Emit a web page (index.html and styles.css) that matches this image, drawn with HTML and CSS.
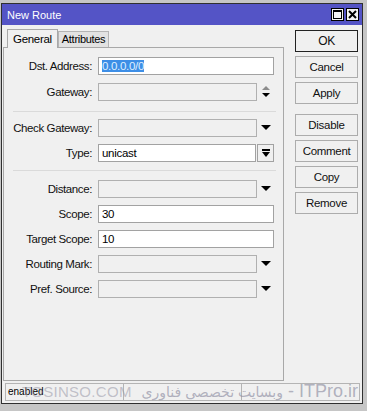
FILE: index.html
```html
<!DOCTYPE html>
<html lang="en">
<head>
    <meta charset="UTF-8">
    <title>New Route</title>
    <link rel="stylesheet" href="styles.css">
</head>
<body>
    <div class="window">
        <!-- Title bar -->
        <div class="titlebar">
            <span class="title">New Route</span>
            <div class="title-buttons">
                <span class="tbtn"><svg width="9" height="9" viewBox="0 0 9 9"><rect x="0.5" y="0.5" width="8" height="8" fill="none" stroke="#000" stroke-width="1"/><rect x="0" y="0" width="9" height="2" fill="#000"/></svg></span>
                <span class="tbtn"><svg width="9" height="9" viewBox="0 0 9 9"><path d="M1 1 L8 8 M8 1 L1 8" stroke="#000" stroke-width="2"/></svg></span>
            </div>
        </div>

        <div class="main">
            <div class="left">
                <div class="tabs">
                    <span class="tab active">General</span>
                    <span class="tab">Attributes</span>
                </div>
                <div class="panel">
                    <div class="group group-1">
                        <div class="row">
                            <label class="label">Dst. Address:</label>
                            <div class="field wide enabled"><span class="selected">0.0.0.0/0</span></div>
                        </div>
                        <div class="row">
                            <label class="label">Gateway:</label>
                            <div class="field disabled"></div>
                            <span class="arrow">
                                <svg width="10" height="14" viewBox="0 0 10 14"><path d="M1 5 L5 1 L9 5 Z" fill="#8c8c8c"/><path d="M1 8 L9 8 L5 12 Z" fill="#000"/></svg>
                            </span>
                        </div>
                    </div>
                    <div class="sep sep-1"></div>
                    <div class="group group-2">
                        <div class="row">
                            <label class="label">Check Gateway:</label>
                            <div class="field disabled"></div>
                            <span class="arrow">
                                <svg width="10" height="6" viewBox="0 0 10 6"><path d="M0 0 L10 0 L5 5 Z" fill="#000"/></svg>
                            </span>
                        </div>
                        <div class="row">
                            <label class="label">Type:</label>
                            <div class="field enabled type-field">unicast</div>
                            <span class="type-btn">
                                <svg width="8" height="9" viewBox="0 0 8 9"><rect x="0" y="0" width="8" height="2" fill="#000"/><path d="M0 3 L8 3 L4 8 Z" fill="#000"/></svg>
                            </span>
                        </div>
                    </div>
                    <div class="sep sep-2"></div>
                    <div class="group group-3">
                        <div class="row">
                            <label class="label">Distance:</label>
                            <div class="field disabled"></div>
                            <span class="arrow">
                                <svg width="10" height="6" viewBox="0 0 10 6"><path d="M0 0 L10 0 L5 5 Z" fill="#000"/></svg>
                            </span>
                        </div>
                        <div class="row">
                            <label class="label">Scope:</label>
                            <div class="field wide enabled">30</div>
                        </div>
                        <div class="row">
                            <label class="label">Target Scope:</label>
                            <div class="field wide enabled">10</div>
                        </div>
                        <div class="row">
                            <label class="label">Routing Mark:</label>
                            <div class="field disabled"></div>
                            <span class="arrow">
                                <svg width="10" height="6" viewBox="0 0 10 6"><path d="M0 0 L10 0 L5 5 Z" fill="#000"/></svg>
                            </span>
                        </div>
                        <div class="row">
                            <label class="label">Pref. Source:</label>
                            <div class="field disabled"></div>
                            <span class="arrow">
                                <svg width="10" height="6" viewBox="0 0 10 6"><path d="M0 0 L10 0 L5 5 Z" fill="#000"/></svg>
                            </span>
                        </div>
                    </div>
                </div>
            </div>

            <!-- Buttons -->
            <div class="buttons">
                <button class="btn default">OK</button>
                <button class="btn">Cancel</button>
                <button class="btn">Apply</button>
                <button class="btn spaced">Disable</button>
                <button class="btn">Comment</button>
                <button class="btn">Copy</button>
                <button class="btn">Remove</button>
            </div>
        </div>

        <!-- Status bar -->
        <div class="statusbar">
            <span class="cell first">enabled</span>
            <span class="cell"></span>
            <span class="cell"></span>
        </div>
        <div class="watermark">
            <span class="wm-left">TOSINSO.COM</span>
            <span class="wm-right"><span class="wm-fa" dir="rtl">وبسایت تخصصی فناوری</span> - ITPro.ir</span>
        </div>
    </div>
</body>
</html>
```

FILE: styles.css
```css
/* Global styles */
body {
    margin: 0;
    padding: 0;
    background: #c6c6c6;
    font-family: 'Liberation Sans', Arial, 'DejaVu Sans', sans-serif;
    color: #000;
}

.window {
    position: relative;
    margin: 3px 0 0 1px;
    width: 360px;
    height: 399px;
    border: 1px solid #303030;
    background: #f0f0f0;
    overflow: hidden;
}

/* Title bar */
.titlebar {
    height: 21px;
    background: #5454c6;
    display: flex;
    align-items: center;
    justify-content: space-between;
    padding: 0 3px 0 5px;
}

.titlebar .title {
    color: #fff;
    font-size: 11px;
}

.title-buttons {
    display: flex;
    gap: 2px;
}

.tbtn {
    width: 11px;
    height: 11px;
    border: 1px solid #000;
    background: #f4f4f4;
    display: flex;
    align-items: center;
    justify-content: center;
}

/* Main area */
.main {
    display: flex;
    padding: 3px 0 0 1px;
}

.left {
    width: 281px;
}

.tabs {
    display: flex;
    align-items: flex-end;
    height: 19px;
    padding-left: 4px;
}

.tab {
    font-size: 11px;
    letter-spacing: -0.3px;
    height: 15px;
    line-height: 15px;
    padding: 0 3px;
    border: 1px solid #b4b4b4;
    border-bottom: none;
    background: #e2e2e2;
}

.tab.active {
    height: 18px;
    line-height: 18px;
    font-size: 11.5px;
    padding: 0 5px;
    background: #f0f0f0;
    border-color: #a8a8a8;
    position: relative;
    top: 1px;
}

.panel {
    height: 332px;
    border: 1px solid #a8a8a8;
    background: #f0f0f0;
}

.group {
    display: flex;
    flex-direction: column;
}

.group-1 {
    padding-top: 9px;
    gap: 8px;
}

.group-2 {
    gap: 7px;
}

.group-3 {
    gap: 7px;
}

.sep {
    height: 1px;
    background: #dadada;
    margin: 0 7px 0 9px;
}

.sep-1 {
    margin-top: 10px;
    margin-bottom: 7px;
}

.sep-2 {
    margin-top: 8px;
    margin-bottom: 9px;
}

.row {
    display: flex;
    align-items: center;
    height: 18px;
}

.label {
    width: 88px;
    text-align: right;
    font-size: 11.5px;
    letter-spacing: -0.4px;
    color: #111;
}

.field {
    box-sizing: border-box;
    margin-left: 6px;
    width: 159px;
    height: 18px;
    font-size: 11.5px;
    letter-spacing: -0.3px;
    line-height: 16px;
    padding-left: 3px;
}

.field.wide {
    width: 176px;
}

.field.enabled {
    background: #fff;
    border: 1px solid #a2a2a2;
}

.field.disabled {
    background: #f0f0f0;
    border: 1px solid #b0b0b0;
}

.field.type-field {
    width: 158px;
}

.selected {
    background: #3d8ee6;
    color: #dfefff;
}

.arrow {
    width: 17px;
    display: flex;
    justify-content: center;
    align-items: center;
}

.type-btn {
    box-sizing: border-box;
    margin-left: 1px;
    width: 17px;
    height: 18px;
    border: 1px solid #a2a2a2;
    background: #f0f0f0;
    display: flex;
    justify-content: center;
    align-items: center;
}

/* Buttons column */
.buttons {
    margin-left: 11px;
    padding-top: 2px;
    width: 63px;
    display: flex;
    flex-direction: column;
    gap: 4px;
}

.btn {
    height: 22px;
    padding: 0;
    font-family: inherit;
    font-size: 11.5px;
    letter-spacing: -0.3px;
    color: #111;
    background: #f0f0f0;
    border: 1px solid #acacac;
    border-radius: 0;
}

.btn.default {
    border-color: #222;
    font-size: 12px;
}

.btn.spaced {
    margin-top: 6px;
}

/* Status bar */
.statusbar {
    display: flex;
    margin: 2px 0 0 3px;
    height: 18px;
    width: 355px;
}

.cell {
    box-sizing: border-box;
    flex: 1;
    border: 1px solid #b4b4b4;
    border-left: none;
    font-size: 10px;
    line-height: 16px;
    padding-left: 2px;
}

.cell.first {
    border-left: 1px solid #b4b4b4;
}

/* Watermark over the status bar */
.watermark {
    position: absolute;
    left: 20px;
    right: 4px;
    bottom: 1px;
    display: flex;
    justify-content: space-between;
    align-items: baseline;
    color: rgba(140, 140, 160, 0.65);
    white-space: nowrap;
    pointer-events: none;
}

.wm-left {
    flex: none;
    font-size: 15px;
    letter-spacing: 0.3px;
    color: rgba(150, 150, 165, 0.55);
}

.wm-right {
    flex: none;
    font-size: 18px;
}

.wm-fa {
    font-size: 14px;
}
```
